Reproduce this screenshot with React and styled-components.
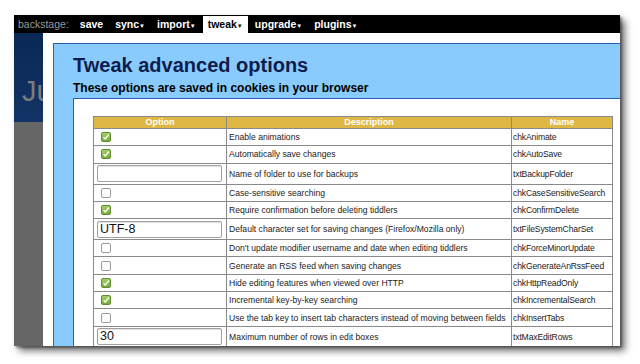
import React from "react";
import styled, { createGlobalStyle } from "styled-components";

const GlobalStyle = createGlobalStyle`
  html, body {
    margin: 0;
    padding: 0;
    background: #fff;
    font-family: "Liberation Sans", Arial, sans-serif;
  }
`;

const Page = styled.div`
  width: 640px;
  height: 364px;
  padding: 15px 0 0 14px;
  box-sizing: border-box;
  overflow: hidden;
`;

const Window = styled.div`
  width: 606px;
  height: 331px;
  display: flex;
  flex-direction: column;
  overflow: hidden;
  background: #fff;
  box-shadow: 5px 5px 7px rgba(0, 0, 0, 0.55), 2px 2px 2px rgba(0, 0, 0, 0.35);
`;

const Toolbar = styled.div`
  height: 18px;
  flex: none;
  display: flex;
  align-items: stretch;
  background: #000;
  padding-left: 4px;
  font-size: 10.5px;
  line-height: 18px;
`;

const Label = styled.span`
  color: #9a9a9a;
  margin-right: 5px;
`;

const Item = styled.span`
  padding: 0 ${(p) => (p.active ? "5px" : "6px")};
  margin: 0 ${(p) => (p.active ? "1px" : "0")};
  font-weight: bold;
  color: ${(p) => (p.active ? "#000" : "#fff")};
  background: ${(p) => (p.active ? "#fff" : "transparent")};
  margin-top: ${(p) => (p.active ? "1px" : "0")};
  line-height: ${(p) => (p.active ? "17px" : "18px")};
`;

const Arrow = styled.span`
  font-size: 6px;
  vertical-align: 0.5px;
`;

const Body = styled.div`
  flex: 1;
  display: flex;
  min-height: 0;
`;

const Side = styled.div`
  width: 29px;
  flex: none;
  display: flex;
  flex-direction: column;
  overflow: hidden;
`;

const SideTop = styled.div`
  height: 89px;
  background: linear-gradient(180deg, #0a2856 0%, #123466 100%);
  color: #7c7c7c;
  font-size: 29px;
  padding: 44px 0 0 8px;
  box-sizing: border-box;
  white-space: nowrap;
  line-height: 29px;
  overflow: hidden;
`;

const SideBottom = styled.div`
  flex: 1;
  background: #666;
`;

const Main = styled.div`
  flex: 1;
  padding: 10px 0 0 10px;
  display: flex;
  min-width: 0;
`;

const Panel = styled.div`
  flex: 1;
  background: #89cbfd;
  border-top: 1px solid #2c5fb8;
  border-left: 1px solid #2c5fb8;
  padding: 9px 0 0 19px;
  display: flex;
  flex-direction: column;
  min-width: 0;
`;

const Title = styled.h1`
  margin: 0;
  font-size: 20px;
  line-height: 24px;
  font-weight: bold;
  color: #0f1d4d;
`;

const Subtitle = styled.h2`
  margin: 4px 0 3px;
  font-size: 12px;
  line-height: 14px;
  font-weight: bold;
  color: #000;
`;

const Content = styled.div`
  flex: 1;
  background: #fff;
  border-top: 1px solid #2c5fb8;
  border-left: 1px solid #2c5fb8;
  padding: 17px 0 0 19px;
`;

const Table = styled.table`
  border-collapse: collapse;
  width: 519px;
  table-layout: fixed;
  font-size: 8.6px;
  color: #222;
  border: 1px solid #7d7d7d;
`;

const Th = styled.th`
  background: #dfb843;
  color: #fff;
  font-weight: bold;
  font-size: 9px;
  height: 11px;
  line-height: 11px;
  padding: 0;
  border: 1px solid #8a8a8a;
  text-align: center;
`;

const Td = styled.td`
  height: ${(p) => (p.tall ? "20px" : "16.3px")};
  padding: 0 0 0 ${(p) => (p.pad ? p.pad : "2px")};
  border: 1px solid #8a8a8a;
  white-space: nowrap;
  overflow: hidden;
  vertical-align: middle;
  letter-spacing: ${(p) => (p.tight ? "-0.15px" : "0")};
`;

const Box = styled.span`
  display: block;
  width: 10px;
  height: 10px;
  margin-left: 2px;
  box-sizing: border-box;
  border-radius: 2px;
  border: 1px solid ${(p) => (p.checked ? "#5f8f2e" : "#9a9a9a")};
  background: ${(p) =>
    p.checked ? "linear-gradient(180deg, #a7d06b 0%, #78a83a 100%)" : "#fff"};
  position: relative;
  svg {
    position: absolute;
    left: 0;
    top: 0;
  }
`;

const Input = styled.div`
  width: 125px;
  height: 17px;
  box-sizing: border-box;
  border: 1px solid #a0a0a0;
  border-radius: 2px;
  box-shadow: inset 0 1px 1px rgba(0, 0, 0, 0.12);
  font-size: 12.5px;
  line-height: 15px;
  padding-left: 2px;
  color: #111;
`;

const Check = ({ checked }) => (
  <Box checked={checked}>
    {checked && (
      <svg width="8" height="8" viewBox="0 0 8 8">
        <path d="M1.5 4.2 L3.3 6 L6.8 1.6" fill="none" stroke="#fff" strokeWidth="1.4" />
      </svg>
    )}
  </Box>
);

const options = [
  { type: "chk", value: true, desc: "Enable animations", name: "chkAnimate" },
  { type: "chk", value: true, desc: "Automatically save changes", name: "chkAutoSave" },
  { type: "txt", value: "", desc: "Name of folder to use for backups", name: "txtBackupFolder" },
  { type: "chk", value: false, desc: "Case-sensitive searching", name: "chkCaseSensitiveSearch" },
  { type: "chk", value: true, desc: "Require confirmation before deleting tiddlers", name: "chkConfirmDelete" },
  { type: "txt", value: "UTF-8", desc: "Default character set for saving changes (Firefox/Mozilla only)", name: "txtFileSystemCharSet" },
  { type: "chk", value: false, desc: "Don't update modifier username and date when editing tiddlers", name: "chkForceMinorUpdate" },
  { type: "chk", value: false, desc: "Generate an RSS feed when saving changes", name: "chkGenerateAnRssFeed" },
  { type: "chk", value: true, desc: "Hide editing features when viewed over HTTP", name: "chkHttpReadOnly" },
  { type: "chk", value: true, desc: "Incremental key-by-key searching", name: "chkIncrementalSearch" },
  { type: "chk", value: false, desc: "Use the tab key to insert tab characters instead of moving between fields", name: "chkInsertTabs" },
  { type: "txt", value: "30", desc: "Maximum number of rows in edit boxes", name: "txtMaxEditRows" },
];

const menu = [
  { label: "save" },
  { label: "sync", arrow: true },
  { label: "import", arrow: true },
  { label: "tweak", arrow: true, active: true },
  { label: "upgrade", arrow: true },
  { label: "plugins", arrow: true },
];

export default function App() {
  return (
    <Page>
      <GlobalStyle />
      <Window>
        <Toolbar>
          <Label>backstage:</Label>
          {menu.map((m) => (
            <Item key={m.label} active={m.active}>
              {m.label}
              {m.arrow && <Arrow>▼</Arrow>}
            </Item>
          ))}
        </Toolbar>
        <Body>
          <Side>
            <SideTop>Ju</SideTop>
            <SideBottom />
          </Side>
          <Main>
            <Panel>
              <Title>Tweak advanced options</Title>
              <Subtitle>These options are saved in cookies in your browser</Subtitle>
              <Content>
                <Table>
                  <colgroup>
                    <col style={{ width: "133px" }} />
                    <col style={{ width: "285px" }} />
                    <col style={{ width: "101px" }} />
                  </colgroup>
                  <thead>
                    <tr>
                      <Th>Option</Th>
                      <Th>Description</Th>
                      <Th>Name</Th>
                    </tr>
                  </thead>
                  <tbody>
                    {options.map((o) => (
                      <tr key={o.name}>
                        <Td tall={o.type === "txt"} pad={o.type === "txt" ? "3px" : "5px"}>
                          {o.type === "chk" ? <Check checked={o.value} /> : <Input>{o.value}</Input>}
                        </Td>
                        <Td tall={o.type === "txt"}>{o.desc}</Td>
                        <Td tall={o.type === "txt"} pad="1px" tight>
                          {o.name}
                        </Td>
                      </tr>
                    ))}
                  </tbody>
                </Table>
              </Content>
            </Panel>
          </Main>
        </Body>
      </Window>
    </Page>
  );
}
